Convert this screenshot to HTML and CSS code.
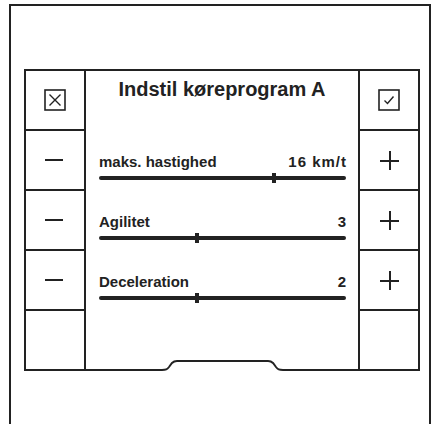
FILE: index.html
```html
<!DOCTYPE html>
<html lang="da">
<head>
    <meta charset="UTF-8">
    <meta name="viewport" content="width=device-width, initial-scale=1.0">
    <title>Indstil køreprogram A</title>
    <link rel="stylesheet" href="styles.css">
</head>
<body>
    <div class="frame">
        <div class="panel">
            <!-- left buttons -->
            <div class="side">
                <div class="cell">
                    <svg width="22" height="22" viewBox="0 0 22 22">
                        <rect x="1" y="1" width="20" height="20" fill="none" stroke="#222" stroke-width="1.6"/>
                        <path d="M5.5 5.5 L16.5 16.5 M16.5 5.5 L5.5 16.5" stroke="#222" stroke-width="1.4"/>
                    </svg>
                </div>
                <div class="cell"><span class="minus"></span></div>
                <div class="cell"><span class="minus"></span></div>
                <div class="cell"><span class="minus"></span></div>
                <div class="cell"></div>
            </div>

            <div class="center">
                <h1 class="title">Indstil køreprogram A</h1>

                <div class="setting">
                    <div class="setting-head">
                        <span>maks. hastighed</span>
                        <span class="value">16 km/t</span>
                    </div>
                    <div class="track"><span class="thumb" style="left: 71%"></span></div>
                </div>

                <div class="setting">
                    <div class="setting-head">
                        <span>Agilitet</span>
                        <span class="value">3</span>
                    </div>
                    <div class="track"><span class="thumb" style="left: 39.5%"></span></div>
                </div>

                <div class="setting">
                    <div class="setting-head">
                        <span>Deceleration</span>
                        <span class="value">2</span>
                    </div>
                    <div class="track"><span class="thumb" style="left: 39.5%"></span></div>
                </div>

                <div class="bottom">
                    <svg class="notch" width="272" height="12" viewBox="0 0 272 12">
                        <path d="M0 11 H76 C80 11 81 10.5 83 8 L86 4 C87.5 2.5 88.5 2 91 2 H182 C184.5 2 185.5 2.5 187 4 L190 8 C192 10.5 193 11 197 11 H272" fill="none" stroke="#222" stroke-width="2"/>
                    </svg>
                </div>
            </div>

            <!-- right buttons -->
            <div class="side">
                <div class="cell">
                    <svg width="22" height="22" viewBox="0 0 22 22">
                        <rect x="1" y="1" width="20" height="20" fill="none" stroke="#222" stroke-width="1.6"/>
                        <path d="M6.5 11.5 L9.5 14.5 L15.5 7.5" fill="none" stroke="#222" stroke-width="1.4"/>
                    </svg>
                </div>
                <div class="cell"><span class="plus"></span></div>
                <div class="cell"><span class="plus"></span></div>
                <div class="cell"><span class="plus"></span></div>
                <div class="cell"></div>
            </div>
        </div>
    </div>
</body>
</html>
```

FILE: styles.css
```css
body {
    margin: 0;
    padding: 0;
    background-color: #fff;
    color: #222;
    font-family: "Liberation Sans", Arial, sans-serif;
    overflow: hidden;
}

.frame {
    box-sizing: border-box;
    width: 422px;
    height: 440px;
    margin: 4px 0 0 9px;
    border: 2px solid #222;
    border-bottom: none;
    padding: 63px 0 0 13px;
}

.panel {
    display: flex;
    width: 396px;
}

.side {
    box-sizing: border-box;
    width: 62px;
    border: 2px solid #222;
}

.cell {
    height: 58px;
    border-bottom: 2px solid #222;
    display: flex;
    align-items: center;
    justify-content: center;
}

.cell:last-child {
    border-bottom: none;
}

.minus {
    display: block;
    width: 18px;
    height: 2px;
    background-color: #222;
    margin-right: 2px;
}

.plus {
    position: relative;
    display: block;
    width: 19px;
    height: 19px;
}

.plus::before,
.plus::after {
    content: "";
    position: absolute;
    background-color: #222;
}

.plus::before {
    left: 0;
    right: 0;
    top: 9px;
    height: 2px;
}

.plus::after {
    top: 0;
    bottom: 0;
    left: 9px;
    width: 2px;
}

.center {
    flex: 1;
    border-top: 2px solid #222;
}

.title {
    box-sizing: border-box;
    height: 60px;
    margin: 0;
    padding-top: 6px;
    font-size: 20px;
    line-height: 24px;
    font-weight: bold;
    text-align: center;
}

.setting {
    box-sizing: border-box;
    height: 60px;
    padding: 22px 12px 0 13px;
}

.setting-head {
    display: flex;
    justify-content: space-between;
    font-size: 15px;
    line-height: 18px;
    font-weight: bold;
}

.value {
    letter-spacing: 1px;
    margin-right: -1px;
}

.track {
    position: relative;
    height: 4px;
    margin-top: 5px;
    border-radius: 2px;
    background-color: #222;
}

.thumb {
    position: absolute;
    top: -3px;
    width: 4px;
    height: 10px;
    margin-left: -2px;
    background-color: #222;
}

.bottom {
    height: 60px;
    display: flex;
    align-items: flex-end;
}

.notch {
    display: block;
}
```
